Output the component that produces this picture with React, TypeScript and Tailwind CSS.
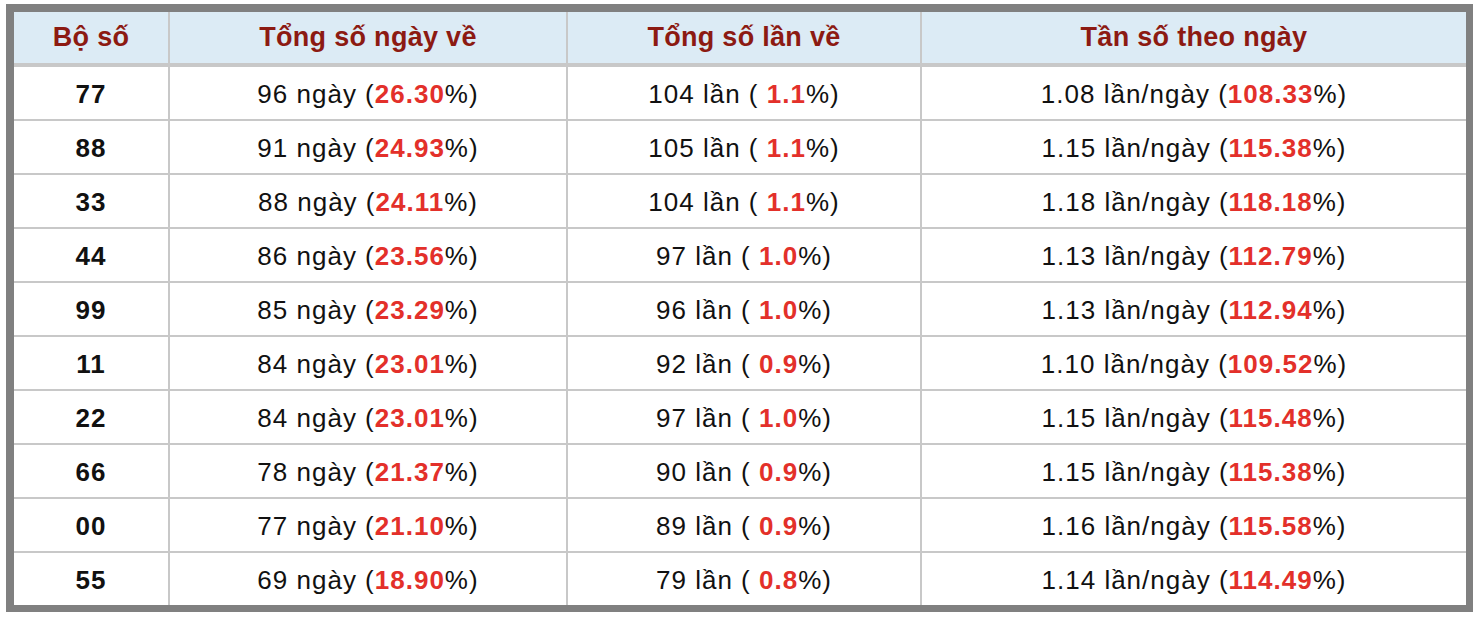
const rows = [
  { so: "77", ngay: 96, pctNgay: "26.30", lan: 104, pctLan: "1.1", tanSo: "1.08", pctTanSo: "108.33" },
  { so: "88", ngay: 91, pctNgay: "24.93", lan: 105, pctLan: "1.1", tanSo: "1.15", pctTanSo: "115.38" },
  { so: "33", ngay: 88, pctNgay: "24.11", lan: 104, pctLan: "1.1", tanSo: "1.18", pctTanSo: "118.18" },
  { so: "44", ngay: 86, pctNgay: "23.56", lan: 97, pctLan: "1.0", tanSo: "1.13", pctTanSo: "112.79" },
  { so: "99", ngay: 85, pctNgay: "23.29", lan: 96, pctLan: "1.0", tanSo: "1.13", pctTanSo: "112.94" },
  { so: "11", ngay: 84, pctNgay: "23.01", lan: 92, pctLan: "0.9", tanSo: "1.10", pctTanSo: "109.52" },
  { so: "22", ngay: 84, pctNgay: "23.01", lan: 97, pctLan: "1.0", tanSo: "1.15", pctTanSo: "115.48" },
  { so: "66", ngay: 78, pctNgay: "21.37", lan: 90, pctLan: "0.9", tanSo: "1.15", pctTanSo: "115.38" },
  { so: "00", ngay: 77, pctNgay: "21.10", lan: 89, pctLan: "0.9", tanSo: "1.16", pctTanSo: "115.58" },
  { so: "55", ngay: 69, pctNgay: "18.90", lan: 79, pctLan: "0.8", tanSo: "1.14", pctTanSo: "114.49" },
];

const cols = "grid grid-cols-[154px_396px_352px_544px] gap-x-[2px]";

function Red({ children }: { children: React.ReactNode }) {
  return <b className="font-bold text-[#e3302a]">{children}</b>;
}

export default function App() {
  return (
    <div className="min-h-screen bg-white pl-[6px] pt-[4px] font-['Liberation_Sans',Arial,sans-serif]">
      <div className="w-[1467px] border-[#808080] border-t-[8px] border-l-[8px] border-r-[7px] border-b-[7px] bg-[#c8c8c8]">
        <div className={`${cols} mb-[4px] h-[51px]`}>
          {["Bộ số", "Tổng số ngày về", "Tổng số lần về", "Tần số theo ngày"].map((h) => (
            <div key={h} className="flex items-center justify-center bg-[#dcebf5] text-[27px] font-bold tracking-[0.3px] text-[#8c1a12]">
              {h}
            </div>
          ))}
        </div>
        <div className="flex flex-col gap-y-[2px]">
          {rows.map((r) => (
            <div key={r.so} className={`${cols} h-[52px] text-[26px] tracking-[1px] text-[#111]`}>
              <div className="flex items-center justify-center bg-white pt-[2px] font-bold">{r.so}</div>
              <div className="flex items-center justify-center bg-white pt-[2px]">
                <span>
                  {r.ngay} ngày (<Red>{r.pctNgay}</Red>%)
                </span>
              </div>
              <div className="flex items-center justify-center bg-white pt-[2px]">
                <span>
                  {r.lan} lần ( <Red>{r.pctLan}</Red>%)
                </span>
              </div>
              <div className="flex items-center justify-center bg-white pt-[2px]">
                <span>
                  {r.tanSo} lần/ngày (<Red>{r.pctTanSo}</Red>%)
                </span>
              </div>
            </div>
          ))}
        </div>
      </div>
    </div>
  );
}
